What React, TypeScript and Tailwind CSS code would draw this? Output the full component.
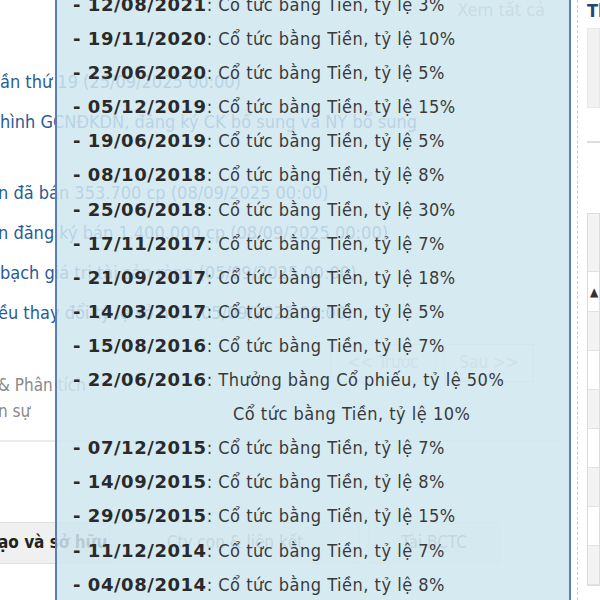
import React from "react";

const rows: { d: string; t: string; extra?: string }[] = [
  { d: "12/08/2021", t: "Cổ tức bằng Tiền, tỷ lệ 3%" },
  { d: "19/11/2020", t: "Cổ tức bằng Tiền, tỷ lệ 10%" },
  { d: "23/06/2020", t: "Cổ tức bằng Tiền, tỷ lệ 5%" },
  { d: "05/12/2019", t: "Cổ tức bằng Tiền, tỷ lệ 15%" },
  { d: "19/06/2019", t: "Cổ tức bằng Tiền, tỷ lệ 5%" },
  { d: "08/10/2018", t: "Cổ tức bằng Tiền, tỷ lệ 8%" },
  { d: "25/06/2018", t: "Cổ tức bằng Tiền, tỷ lệ 30%" },
  { d: "17/11/2017", t: "Cổ tức bằng Tiền, tỷ lệ 7%" },
  { d: "21/09/2017", t: "Cổ tức bằng Tiền, tỷ lệ 18%" },
  { d: "14/03/2017", t: "Cổ tức bằng Tiền, tỷ lệ 5%" },
  { d: "15/08/2016", t: "Cổ tức bằng Tiền, tỷ lệ 7%" },
  { d: "22/06/2016", t: "Thưởng bằng Cổ phiếu, tỷ lệ 50%", extra: "Cổ tức bằng Tiền, tỷ lệ 10%" },
  { d: "07/12/2015", t: "Cổ tức bằng Tiền, tỷ lệ 7%" },
  { d: "14/09/2015", t: "Cổ tức bằng Tiền, tỷ lệ 8%" },
  { d: "29/05/2015", t: "Cổ tức bằng Tiền, tỷ lệ 15%" },
  { d: "11/12/2014", t: "Cổ tức bằng Tiền, tỷ lệ 7%" },
  { d: "04/08/2014", t: "Cổ tức bằng Tiền, tỷ lệ 8%" },
];

const font = { fontFamily: "'DejaVu Sans Condensed', 'DejaVu Sans', sans-serif" };
const boldFont = { fontFamily: "'DejaVu Sans', sans-serif" };

export default function App() {
  return (
    <div className="relative w-[600px] h-[600px] overflow-hidden bg-white" style={font}>
      <div className="flex h-full">
        {/* left column */}
        <div className="w-[578px] shrink-0 border-r border-dashed border-[#cfcfcf] flex flex-col text-[18px]">
          <div className="h-[28px] flex justify-end pr-[32px] -mt-[4px] text-[#9a9a9a] leading-[28px]">
            Xem tất cả
          </div>
          <div className="mt-[38px] flex flex-col text-[#2a5b97] leading-[40px] whitespace-nowrap">
            <div>ần thứ 19 (25/09/2025 00:00)</div>
            <div>hình GCNĐKDN, đăng ký CK bổ sung và NY bổ sung</div>
            <div className="h-[31px]"></div>
            <div className="-ml-[2px]">n đã bán 353.700 cp (08/09/2025 00:00)</div>
            <div className="-ml-[2px]">n đăng ký bán 1.400.000 cp (08/09/2025 00:00)</div>
            <div>bạch giá trị tài sản ròng (05/09/2025 00:00)</div>
            <div className="-ml-[2px]">ều thay đổi tỷ lệ sở hữu (05/09/2025 00:00)</div>
          </div>
          <div className="mt-[11px] flex justify-end gap-[8px] pr-[43px]">
            <div className="h-[38px] w-[106px] border border-[#e2e2e2] text-[#bbbbbb] text-[17px] flex items-center justify-center">
              &lt;&lt; Trước
            </div>
            <div className="h-[38px] w-[90px] border border-[#e2e2e2] text-[#bbbbbb] text-[17px] flex items-center justify-center">
              Sau &gt;&gt;
            </div>
          </div>
          <div className="mt-[-10px] text-[#8a8a8a] text-[17px] leading-[26px] -ml-[2px] whitespace-nowrap">
            <div>&amp; Phân tích</div>
            <div>n sự</div>
          </div>
          <div className="mt-[16px] h-[2px] w-[560px] bg-[#ececec]"></div>
          <div className="mt-[80px] flex h-[42px] text-[17px] whitespace-nowrap">
            <div className="w-[112px] bg-[#f0f0f0] border border-[#e0e0e0] border-l-0 flex items-center font-bold text-[#222] -ml-[2px]">
              ạo và sở hữu
            </div>
            <div className="w-[250px] bg-[#f7f7f7] border border-[#e6e6e6] flex items-center justify-center text-[#777]">
              Cty con &amp; liên kết
            </div>
            <div className="ml-[8px] w-[132px] bg-[#f7f7f7] border border-[#e6e6e6] flex items-center justify-center text-[#777]">
              Tài BCTC
            </div>
          </div>
        </div>
        {/* right column */}
        <div className="flex-1 min-w-0 pl-[9px] flex flex-col overflow-hidden">
          <div className="text-[18px] font-bold text-[#24477a] leading-[22px] whitespace-nowrap">Thống kê</div>
          <div className="mt-[6px] h-[80px] bg-[#f1f1f1] border border-[#e8e8e8]"></div>
          <div className="mt-[33px] h-[2px] w-[14px] bg-[#dddddd]"></div>
          <div className="mt-[70px] border border-[#dcdcdc] flex flex-col">
            <div className="h-[58px] bg-[#f3f3f3] border-b border-[#e2e2e2]"></div>
            <div className="h-[40px] bg-white border-b border-[#e2e2e2] flex items-center pl-[2px] text-[#333] text-[12px]">▲</div>
            <div className="h-[39px] bg-[#f3f3f3] border-b border-[#e2e2e2]"></div>
            <div className="h-[39px] bg-white border-b border-[#e2e2e2]"></div>
            <div className="h-[39px] bg-[#f3f3f3] border-b border-[#e2e2e2]"></div>
            <div className="h-[39px] bg-white border-b border-[#e2e2e2]"></div>
            <div className="h-[39px] bg-[#f3f3f3] border-b border-[#e2e2e2]"></div>
            <div className="h-[39px] bg-white border-b border-[#e2e2e2]"></div>
            <div className="h-[39px] bg-[#f3f3f3] border-b border-[#e2e2e2]"></div>
          </div>
        </div>
      </div>

      {/* tooltip overlay */}
      <div className="absolute left-[55px] top-[-12px] w-[516px] h-[640px] bg-[rgba(207,230,240,0.86)] border-x-2 border-[#5a7fb8] pl-[16px] text-[18px] leading-[34.1px] text-[#3a3a3a]">
        {rows.map((r) => (
          <React.Fragment key={r.d}>
            <div className="whitespace-nowrap tracking-[0.5px]">
              <span className="font-bold text-[#2a2a2a] tracking-[0.55px]" style={boldFont}>
                - {r.d}
              </span>
              : {r.t}
            </div>
            {r.extra && <div className="whitespace-nowrap tracking-[0.5px] pl-[160px]">{r.extra}</div>}
          </React.Fragment>
        ))}
      </div>
    </div>
  );
}
